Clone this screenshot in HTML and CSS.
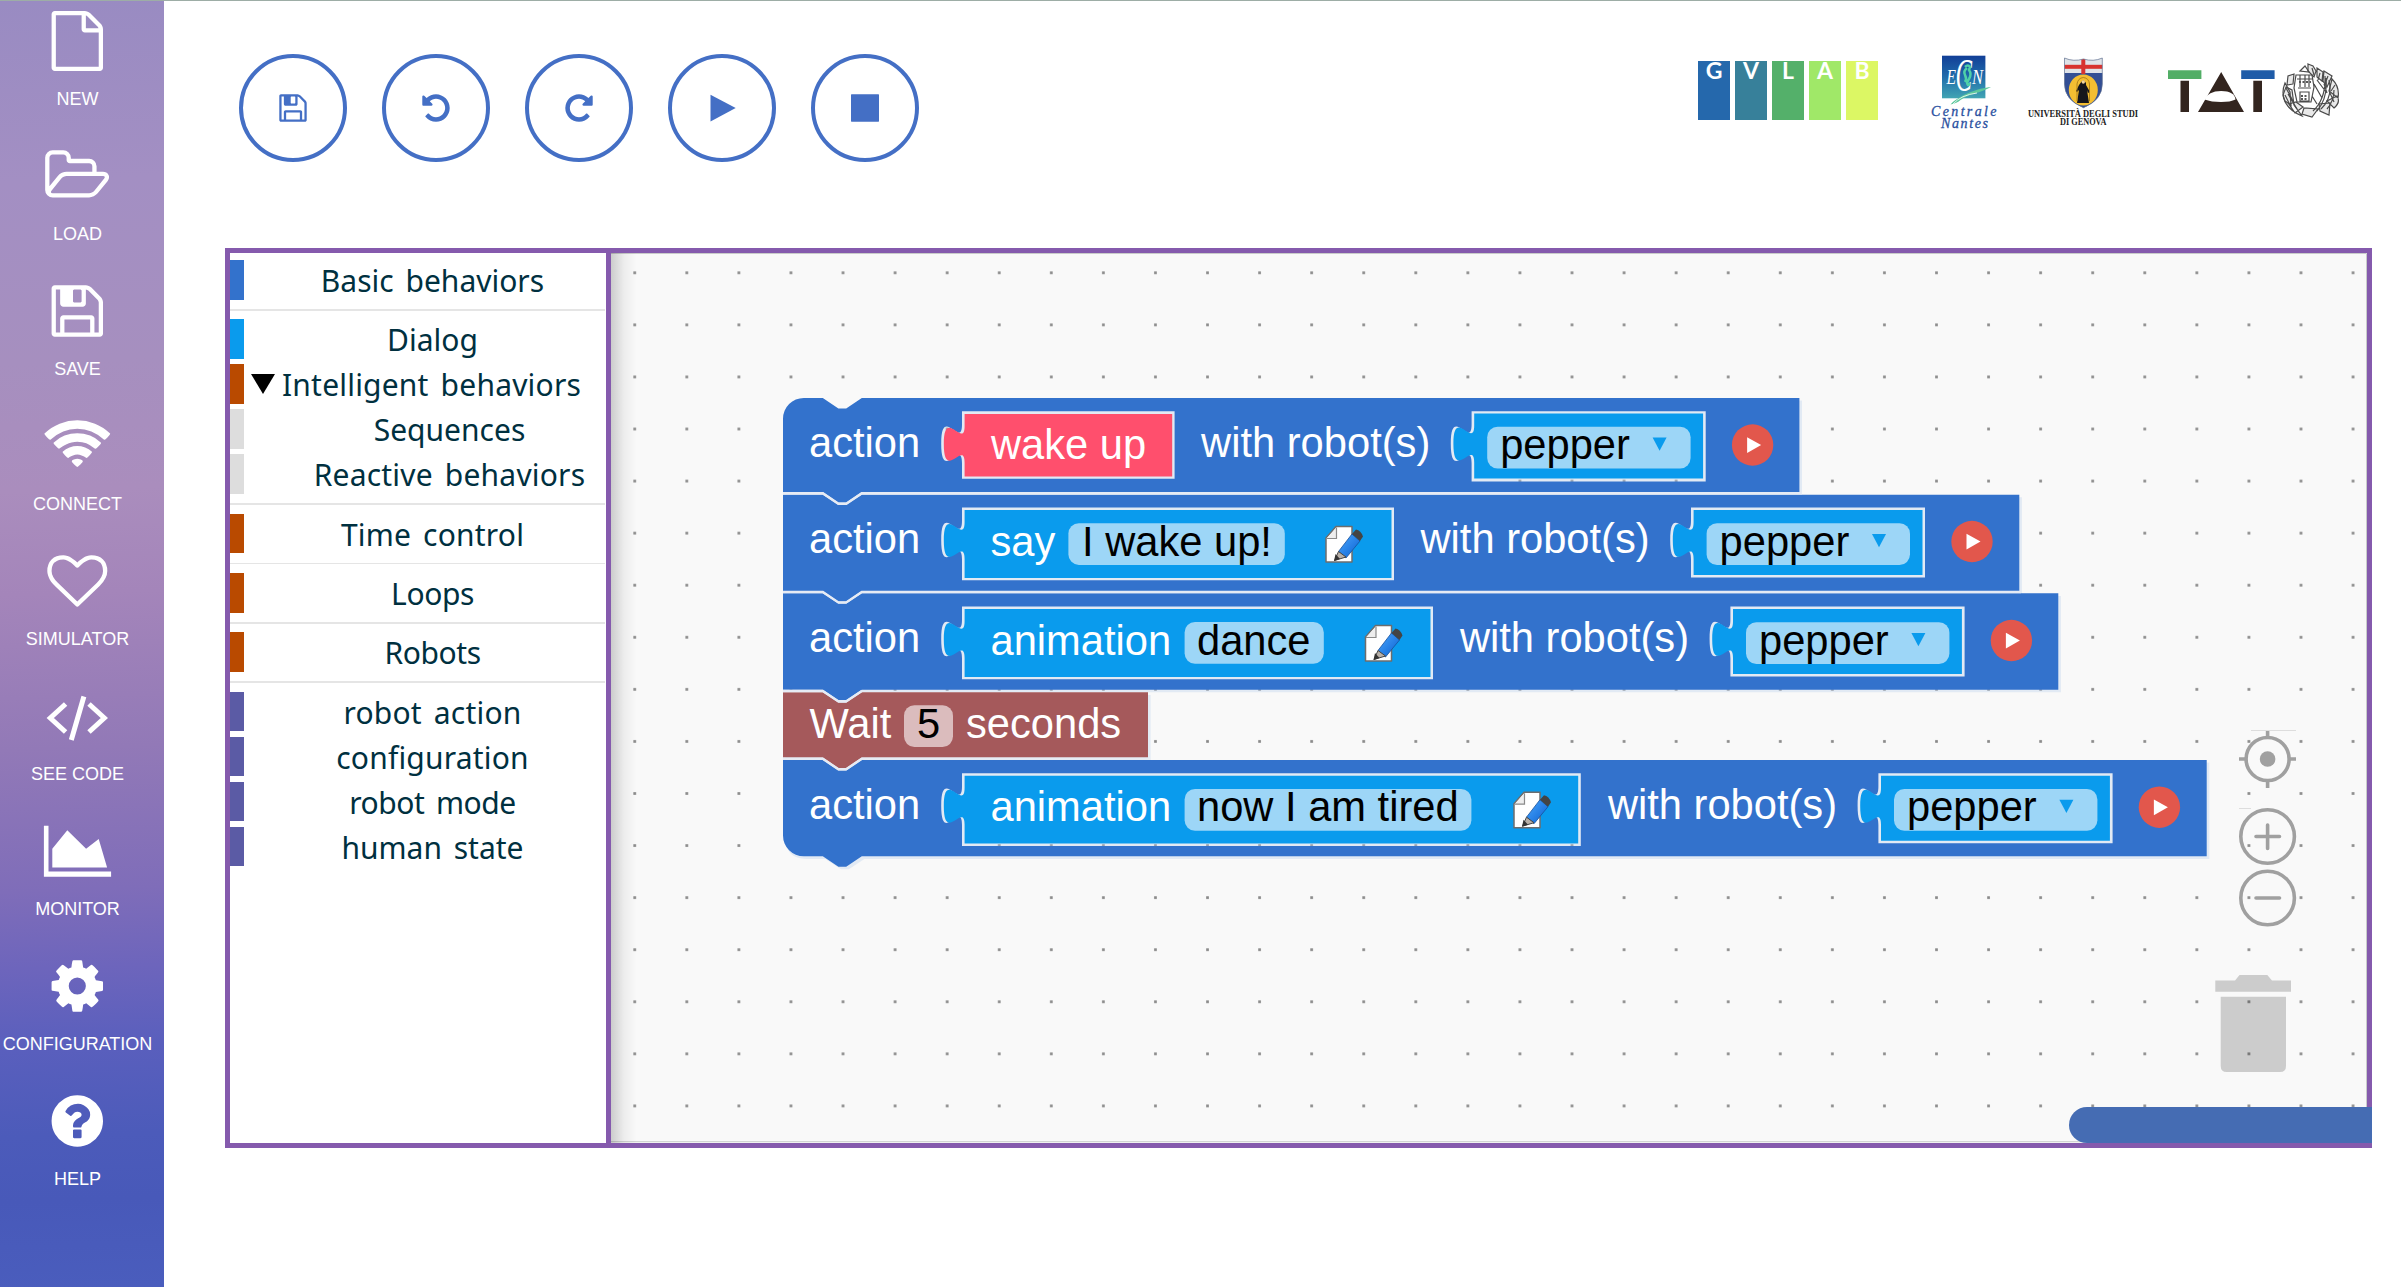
FILE: index.html
```html
<!DOCTYPE html>
<html lang="en">
<head>
<meta charset="utf-8">
<title>Robot programming</title>
<link rel="stylesheet" href="styles.css">
</head>
<body>
<svg class="defs" aria-hidden="true">
  <symbol id="floppy" viewBox="0 0 1792 1792"><path d="M512 1536h768v-384h-768v384zm896 0h128v-896q0-14-10-38.5t-20-34.5l-281-281q-10-10-34-20t-39-10v416q0 40-28 68t-68 28h-576q-40 0-68-28t-28-68v-416h-128v1280h128v-416q0-40 28-68t68-28h832q40 0 68 28t28 68v416zm-384-928v-320q0-13-9.5-22.5t-22.5-9.5h-192q-13 0-22.5 9.5t-9.5 22.5v320q0 13 9.5 22.5t22.5 9.5h192q13 0 22.5-9.5t9.5-22.5zm640 32v928q0 40-28 68t-68 28h-1344q-40 0-68-28t-28-68v-1344q0-40 28-68t68-28h928q40 0 88 20t76 48l280 280q28 28 48 76t20 88z"/></symbol>
  <symbol id="undo" viewBox="0 0 1792 1792"><path d="M1664 896q0 156-61 298t-164 245-245 164-298 61q-172 0-327-72.5t-264-204.5q-7-10-6.5-22.5t8.5-20.5l137-138q10-9 25-9 16 2 23 12 73 95 179 147t225 52q104 0 198.5-40.5t163.5-109.5 109.5-163.5 40.5-198.5-40.5-198.5-109.5-163.5-163.5-109.5-198.5-40.5q-98 0-188 35.5t-160 101.5l137 138q31 30 14 69-17 40-59 40h-448q-26 0-45-19t-19-45v-448q0-42 40-59 39-17 69 14l130 129q107-101 244.5-156.5t284.5-55.5q156 0 298 61t245 164 164 245 61 298z"/></symbol>
</svg>
<div class="app">
  <nav class="sidebar">
    <a class="nav"><svg viewBox="0 0 1792 1792"><path d="M1596 380q28 28 48 76t20 88v1152q0 40-28 68t-68 28h-1344q-40 0-68-28t-28-68v-1600q0-40 28-68t68-28h896q40 0 88 20t76 48zm-444-244v376h376q-10-29-22-41l-313-313q-12-12-41-22zm384 1528v-1024h-416q-40 0-68-28t-28-68v-416h-768v1536h1280z"/></svg><span>NEW</span></a>
    <a class="nav"><svg viewBox="0 0 2048 1792"><path d="M1845 931q0-35-53-35h-1088q-40 0-85.5 21.5t-71.5 52.5l-294 363q-18 24-18 40 0 35 53 35h1088q40 0 86-22t71-53l294-363q18-22 18-39zm-1141-163h768v-160q0-40-28-68t-68-28h-576q-40 0-68-28t-28-68v-64q0-40-28-68t-68-28h-320q-40 0-68 28t-28 68v853l256-315q44-53 116-87.5t140-34.5zm1269 163q0 62-46 120l-295 363q-43 53-116 87.5t-140 34.5h-1088q-92 0-158-66t-66-158v-960q0-92 66-158t158-66h320q92 0 158 66t66 158v32h544q92 0 158 66t66 158v160h192q54 0 99 24.5t67 70.5q15 32 15 68z"/></svg><span>LOAD</span></a>
    <a class="nav"><svg><use href="#floppy"/></svg><span>SAVE</span></a>
    <a class="nav"><svg viewBox="0 0 2048 1792"><path d="M1024 1523q-20 0-93-73.5t-73-93.5q0-32 62.5-54t103.5-22 103.5 22 62.5 54q0 20-73 93.5t-93 73.5zm270-271q-2 0-40-25t-101.5-50-128.5-25-128.5 25-101 50-40.5 25q-18 0-93.5-75t-75.5-93q0-13 10-23 78-77 196-121t233-44 233 44 196 121q10 10 10 23 0 18-75.5 93t-93.5 75zm273-272q-11 0-23-8-136-105-252-154.5t-268-49.5q-85 0-170.5 22t-149 53-113.5 62-79 53-31 22q-17 0-92-75t-75-93q0-12 10-22 132-132 320-205t380-73 380 73 320 205q10 10 10 22 0 18-75 93t-92 75zm271-271q-11 0-22-9-179-157-371.5-236.5t-420.5-79.5-420.5 79.5-371.5 236.5q-11 9-22 9-17 0-92.5-75t-75.5-93q0-13 10-23 187-186 445-288t527-102 527 102 445 288q10 10 10 23 0 18-75.5 93t-92.5 75z"/></svg><span>CONNECT</span></a>
    <a class="nav"><svg viewBox="0 0 1792 1792"><path d="M1664 596q0-81-21.5-143t-55-98.5-81.5-59.5-94-31-98-8-112 25.5-110.5 64-86.5 72-60 61.5q-18 22-49 22t-49-22q-24-28-60-61.5t-86.5-72-110.5-64-112-25.5-98 8-94 31-81.5 59.5-55 98.5-21.5 143q0 168 187 355l581 560 580-559q188-188 188-356zm128 0q0 221-229 450l-623 600q-18 18-44 18t-44-18l-624-602q-10-8-27.5-26t-55.5-65.5-68-97.5-53.5-121-23.5-138q0-220 127-344t351-124q62 0 126.5 21.5t120 58 95.5 68.5 76 68q36-36 76-68t95.5-68.5 120-58 126.5-21.5q224 0 351 124t127 344z"/></svg><span>SIMULATOR</span></a>
    <a class="nav"><svg viewBox="0 0 68 60" class="line"><path d="M22.300 18L7 32l15.300 14M45.700 18L61 32 45.700 46M40.600 10.500L28 54"/></svg><span>SEE CODE</span></a>
    <a class="nav"><svg viewBox="0 0 68 60"><path d="M.6 4.700H5.200v45.800h62.600v5.200H.6zM9 46.500V27.800L24 9.200l18.800 18.600L55.400 18 63.800 46.500z"/></svg><span>MONITOR</span></a>
    <a class="nav"><svg viewBox="0 0 1792 1792"><path d="M1152 896q0-106-75-181t-181-75-181 75-75 181 75 181 181 75 181-75 75-181zm512-109v222q0 12-8 23t-20 13l-185 28q-19 54-39 91 35 50 107 138 10 12 10 25t-9 23q-27 37-99 108t-94 71q-12 0-26-9l-138-108q-44 23-91 38-16 136-29 186-7 28-36 28h-222q-14 0-24.500-8.500t-11.500-21.500l-28-184q-49-16-90-37l-141 107q-10 9-25 9-14 0-25-11-126-114-165-168-7-10-7-23 0-12 8-23 15-21 51-66.500t54-70.500q-27-50-41-99l-183-27q-13-2-21-12.500t-8-23.500v-222q0-12 8-23t19-13l186-28q14-46 39-92-40-57-107-138-10-12-10-24 0-10 9-23 26-36 98.500-107.500t94.500-71.500q13 0 26 10l138 107q44-23 91-38 16-136 29-186 7-28 36-28h222q14 0 24.500 8.500t11.500 21.500l28 184q49 16 90 37l142-107q9-9 24-9 13 0 25 10 129 119 165 170 7 8 7 22 0 12-8 23-15 21-51 66.500t-54 70.500q26 50 41 98l183 28q13 2 21 12.500t8 23.500z"/></svg><span>CONFIGURATION</span></a>
    <a class="nav"><svg viewBox="0 0 1792 1792"><path d="M1024 1376v-192q0-14-9-23t-23-9h-192q-14 0-23 9t-9 23v192q0 14 9 23t23 9h192q14 0 23-9t9-23zm256-672q0-88-55.500-163t-138.500-116-170-41q-243 0-371 213-15 24 8 42l132 100q7 6 19 6 16 0 25-12 53-68 86-92 34-24 86-24 48 0 85.500 26t37.500 59q0 38-20 61t-68 45q-63 28-115.500 86.500t-52.500 125.500v36q0 14 9 23t23 9h192q14 0 23-9t9-23q0-19 21.500-49.500t54.500-49.500q32-18 49-28.500t46-35 44.500-48 28-60.500 12.500-81zm384 192q0 209-103 385.500t-279.500 279.500-385.500 103-385.500-103-279.500-279.500-103-385.500 103-385.500 279.500-279.500 385.500-103 385.500 103 279.500 279.500 103 385.500z"/></svg><span>HELP</span></a>
  </nav>
  <main class="main">
    <header class="header">
      <div class="toolbar">
        <button class="tool"><svg><use href="#floppy"/></svg></button>
        <button class="tool"><svg><use href="#undo"/></svg></button>
        <button class="tool"><svg class="mirror"><use href="#undo"/></svg></button>
        <button class="tool"><svg viewBox="0 0 32 32"><path d="M4.500 2.700L29.700 16 4.500 29.600z"/></svg></button>
        <button class="tool"><svg viewBox="0 0 32 32"><rect x="2" y="2.300" width="28" height="27.400" rx=".6"/></svg></button>
      </div>
      <div class="logos">
        <div class="gvlab"><span class="g1">G</span><span class="g2">V</span><span class="g3">L</span><span class="g4">A</span><span class="g5">B</span></div>
        <svg class="ecn" viewBox="1928 50 70 84">
          <defs><linearGradient id="sea" x1="0" y1="0" x2="0" y2="1"><stop offset="0" stop-color="#123f97"/><stop offset=".5" stop-color="#1f6cab"/><stop offset="1" stop-color="#42a5b3"/></linearGradient></defs>
          <rect x="1942" y="55.700" width="43.400" height="42.600" fill="url(#sea)"/>
          <g font-family="Liberation Serif, serif" font-style="italic" fill="#fff"><text x="1946.500" y="83.500" font-size="22" textLength="9.500" lengthAdjust="spacingAndGlyphs">E</text><text x="1955.500" y="90.500" font-size="47" textLength="16.500" lengthAdjust="spacingAndGlyphs">C</text><text x="1972" y="83.500" font-size="22" textLength="11" lengthAdjust="spacingAndGlyphs">N</text></g>
          <path d="M1965 67q3-3 5 0l-1 3q3 4 0 9-3 4-1 6 2 0 1-2M1967 68q-4 3-2 7t0 7" fill="none" stroke="#4fd0a8" stroke-width="2.500"/>
          <path d="M1991 87c-12 1-32 8-40.500 17.500 4-1 8-2 10-4.500 8-6 20-7 30.500-13z" fill="#5cc79c"/>
          <path d="M1953 104q8-9 24-11" fill="none" stroke="#fff" stroke-width=".8"/>
          <g font-family="Liberation Serif, serif" font-style="italic" fill="#2950a0" stroke="#2950a0" stroke-width=".3" font-size="14"><text x="1931" y="115.500" textLength="65.500">Centrale</text><text x="1941" y="127.500" textLength="47">Nantes</text></g>
        </svg>
        <svg class="genova" viewBox="2026 50 116 84">
          <defs><clipPath id="shield"><path d="M2064.500 58q9 4 19 1 10 3 18.800-1v26q0 16-18.800 23.700-19-7.700-19-23.700z"/></clipPath></defs>
          <g clip-path="url(#shield)"><rect x="2064" y="57" width="39" height="52" fill="#dfe3e8"/><rect x="2064" y="73" width="39" height="36" fill="#334f94"/><rect x="2064" y="64.800" width="39" height="4" fill="#d8332f"/><rect x="2081.300" y="58" width="4" height="16" fill="#d8332f"/><ellipse cx="2083.300" cy="90" rx="14.500" ry="15.500" fill="#f4be32"/><path d="M2080.500 83q3-5 5.500 0v2l4 7-2 1-1-3 2 13h-12l2-13-2 2-1-1 3-6z" fill="#16161c"/><circle cx="2083.300" cy="82" r="1.700" fill="#f3d5a0"/><path d="M2077 101V84q1-6 6.300-6.500 5.500.5 6.200 6.500v17" fill="none" stroke="#a97c19" stroke-width=".9"/></g>
          <path d="M2064.500 58q9 4 19 1 10 3 18.800-1v26q0 16-18.800 23.700-19-7.700-19-23.700z" fill="none" stroke="#60708f" stroke-width=".7"/>
          <g font-family="Liberation Serif, serif" font-weight="bold" fill="#222" font-size="10"><text x="2028" y="117" textLength="110" lengthAdjust="spacingAndGlyphs">UNIVERSITÀ DEGLI STUDI</text><text x="2060" y="125.300" textLength="46.500" lengthAdjust="spacingAndGlyphs">DI GENOVA</text></g>
        </svg>
        <svg class="tat" viewBox="2166 50 180 84">
          <path fill="#52ae66" d="M2168 70.300h33.400v8.700H2168z"/><path fill="#1f5ca8" d="M2241.200 70.300h33.400v8.700h-33.400z"/>
          <path fill="#33251f" d="M2180.500 80.700h8.500V112h-8.500zM2253.300 80.700h8.700V112h-8.700zM2221.200 72L2244 112h-46z"/><path fill="#fff" d="M2204.500 99.500q3.500-8.500 16.700-8.500t14.300 8.500q-5 2.500-14.500 2.500t-16.500-2.500z"/>
          <g fill="none" stroke="#4b4b4b" stroke-width="1.200">
            <path fill="#e9e9e9" d="M2283 95q2 14 19 21l-8-11-2-15-6-3zM2293 84l-6 1 1-9 6-2zM2308 64l5 2 3 5-2 6-6-6zM2317 68l6 4-1 9-5-4zM2324 71l8 5-5 11-4-6zM2332 79q8 8 6 19l-9-7zM2337 96q4 6-3 12l-7-7zM2330 103l-1 12-9-4-1-7zM2318 109l-6 8-10-3 2-6zM2303 107l-8 6-6-9 7-2z"/>
            <path d="M2285 101q-4-8 0-18l5 9 1 13zM2291 107l-6-12M2313 111q13-12 12-35M2317 111q11-13 9-33M2321 109q12-11 8-29M2327 109q7-8 7-19M2296 75h16l2 12-3 15h-14l-3-14zM2298 88h13M2300 92h9v9h-9zM2297 79h16M2300 75v12M2305 75v12M2309 75v12M2286 88l7 13M2330 93l4 9M2324 84l3 9M2300 71l5-5 4 6zM2314 84l8 14M2317 80l9 12M2312 96l5 8M2288 94l9 15M2312 68l2 7M2320 73l-2 7M2328 76l-3 8M2335 85l-4 6"/>
            <path stroke-width="2" stroke="#555" stroke-dasharray="2 1.500" d="M2299 82h12M2301 96h7M2301 99h7"/>
          </g>
        </svg>
      </div>
    </header>
    <section class="editor">
      <ul class="toolbox">
        <li class="cat blue"><span>Basic behaviors</span></li><li class="sep"></li>
        <li class="cat sky"><span>Dialog</span></li>
        <li class="cat rust open"><i class="tri"></i><span class="wide">Intelligent behaviors</span></li>
        <li class="cat grey sub"><span>Sequences</span></li>
        <li class="cat grey sub"><span class="wide">Reactive behaviors</span></li><li class="sep"></li>
        <li class="cat rust"><span class="wide">Time control</span></li><li class="sep"></li>
        <li class="cat rust"><span class="tight">Loops</span></li><li class="sep"></li>
        <li class="cat rust"><span class="tight">Robots</span></li><li class="sep"></li>
        <li class="cat violet"><span class="wide">robot action</span></li>
        <li class="cat violet"><span class="wide">configuration</span></li>
        <li class="cat violet"><span class="tight">robot mode</span></li>
        <li class="cat violet"><span>human state</span></li>
      </ul>
      <div class="workspace">
        <svg class="canvas" viewBox="611 253 1756 890" width="1756" height="890">
          <defs>
            <pattern id="grid" x="608.700" y="246.750" width="52.070" height="52.070" patternUnits="userSpaceOnUse"><rect x="24.700" y="24.700" width="2.700" height="2.700" fill="#888"/></pattern>
            <linearGradient id="pen" x1="0" y1="0" x2="1" y2="1"><stop offset="0" stop-color="#4aa8ff"/><stop offset="1" stop-color="#0a5fd0"/></linearGradient>
            <!-- Tail shared by every action block; origin is the robot socket's top-left corner -->
            <g id="robot">
              <text x="-270.500" y="45.700" class="lbl">with robot(s)</text>
              <path class="sky" d="M2.600 2.600v12c0 24-20.800-20-20.800 18.200s20.800-5 20.800 18.700V67.500H231.500V2.600z"/>
              <rect class="field" x="15.600" y="15.800" width="203.400" height="41.700" rx="10.400"/>
              <text x="28.600" y="48" class="val">pepper</text>
              <path class="sky" d="M181 26.500h14l-7 13.200z"/>
              <circle cx="281" cy="34" r="20.700" fill="#e2574c"/><path d="M275.500 26.300L289.500 34l-14 8z" fill="#fff"/>
            </g>
            <!-- Page-and-pencil edit icon -->
            <g id="edit">
              <path d="M11 1.500H27V37H1V13z" fill="#fff" stroke="#6d6d6d" stroke-width="1.500" stroke-linejoin="round"/><path d="M11.500 2.500V13.500H1.500" fill="#eee" stroke="#8a8a8a" stroke-width="1.200"/>
              <path d="M27 9l8 7L21 33l-7.500-6.500z" fill="url(#pen)" stroke="#17509c" stroke-width=".8"/><path d="M27 9l4-4.500q5 1 7 7L35 16z" fill="#444"/><path d="M13.500 26.500L21 32 9.500 35.500z" fill="#b8b0a8" stroke="#444" stroke-width="1"/><path d="M9 36l1.500-7 4.500 5z" fill="#333"/>
            </g>
          </defs>
          <rect x="611" y="253" width="1756" height="890" fill="#f9f9f9"/>
          <rect x="611" y="253" width="1756" height="890" fill="url(#grid)"/>
          <g class="shadow">
            <path transform="translate(2.600 2.600)" d="M783 418.800q0-20.800 20.800-20.800h19l15.600 10.400h7.800L861.800 398h937.600v94H783zM783 494.700H2019.300V591H783zM783 593.300H2058.300V689.700H783zM783 692.300H1148V757.500H783zM783 760H2206.700v96.300H861.800L846.200 866.700h-7.800L822.800 856.300h-19q-20.800 0-20.800-20.800z"/>
          </g>
          <!-- Statement blocks, with sockets cut out -->
          <g class="stmt">
            <path d="M783 418.800a20.800 20.800 0 0 1 20.800-20.800h19l15.600 10.400h7.800L861.800 398H1799.400v94H861.800L846.200 502.400h-7.800L822.800 492H783z
              M962 411.300v13c0 26-20.800-20.800-20.800 19.500s20.800-6.500 20.800 19.500V478.700h212.600V411.300z
              M1471.600 411.300v13c0 26-20.800-20.800-20.800 19.500s20.800-6.500 20.800 19.500V481.400h234.100V411.300z"/>
            <path d="M783 494.700h39.800l15.600 10.400h7.800l15.600-10.400H2019.300V591H861.800l-15.600 10.400h-7.800L822.800 591H783z
              M962 507.500v13c0 26-20.800-20.800-20.800 19.500s20.800-6.500 20.800 19.500V580.300h432V507.500z
              M1691 507.500v13c0 26-20.800-20.800-20.800 19.500s20.800-6.500 20.800 19.500V577.600h234V507.500z"/>
            <path d="M783 593.300h39.800l15.600 10.400h7.800l15.600-10.400H2058.300V689.700H861.800l-15.600 10.400h-7.800L822.800 689.700H783z
              M962 606.500v13c0 26-20.800-20.800-20.800 19.500s20.800-6.500 20.800 19.500V679.300h471V606.500z
              M1730.400 606.500v13c0 26-20.800-20.800-20.800 19.500s20.800-6.500 20.800 19.500V676.600h234.200V606.500z"/>
            <path class="wait" d="M783 692.300h39.800l15.600 10.400h7.800l15.600-10.400H1148V757.500H861.800l-15.600 10.400h-7.800L822.800 757.500H783z"/>
            <path d="M783 760h39.800l15.600 10.400h7.800L861.800 760H2206.700v96.300H861.800L846.200 866.700h-7.800L822.800 856.300h-19a20.800 20.800 0 0 1-20.800-20.800z
              M962 773.200v13c0 26-20.800-20.800-20.800 19.500s20.800-6.500 20.800 19.500V846h618.800V773.200z
              M1878.400 773.200v13c0 26-20.800-20.800-20.800 19.500s20.800-6.500 20.800 19.500V843.300h234.200V773.200z"/>
          </g>
          <g class="seam">
            <path d="M783 493.300h39.800l15.600 10.400h7.800l15.600-10.400H1802M783 592h39.800l15.600 10.400h7.800l15.600-10.400H2021M783 691h39.800l15.600 10.400h7.800l15.600-10.400M783 758.800h39.800l15.600 10.400h7.800l15.600-10.400H1150"/>
          </g>
          <!-- Value blocks -->
          <path class="pink" d="M964.600 413.900v12c0 24-20.800-20-20.800 18.200s20.800-5 20.800 18.700V476.500H1172.200V413.900z"/>
          <path class="sky" d="M964.600 510.100v12c0 24-20.800-20-20.800 18.200s20.800-5 20.800 18.700V578H1391.500V510.100z"/>
          <path class="sky" d="M964.600 609.100v12c0 24-20.800-20-20.800 18.200s20.800-5 20.800 18.700V677H1430.500V609.100z"/>
          <path class="sky" d="M964.600 775.800v12c0 24-20.800-20-20.800 18.200s20.800-5 20.800 18.700V843.600H1578.200V775.800z"/>
          <text x="809" y="456.700" class="lbl">action</text><text x="991" y="459.300" class="lbl">wake up</text>
          <use href="#robot" x="1471.600" y="411"/>
          <text x="809" y="553" class="lbl">action</text><text x="990.500" y="555.700" class="lbl">say</text>
          <rect class="field" x="1068.400" y="523.200" width="216.400" height="41.700" rx="10.400"/><text x="1082" y="555.700" class="val">I wake up!</text>
          <use href="#edit" x="1325" y="525"/><use href="#robot" x="1691" y="507.500"/>
          <text x="809" y="652" class="lbl">action</text><text x="990.500" y="654.700" class="lbl">animation</text>
          <rect class="field" x="1184.600" y="622" width="139.200" height="41.700" rx="10.400"/><text x="1197" y="654.700" class="val">dance</text>
          <use href="#edit" x="1364.500" y="624"/><use href="#robot" x="1730.400" y="606.500"/>
          <text x="809.500" y="737.500" class="lbl">Wait</text><rect class="wfield" x="904" y="705.300" width="49" height="41.700" rx="10.400"/><text x="917" y="737.500" class="val">5</text><text x="966" y="737.500" class="lbl">seconds</text>
          <text x="809" y="818.700" class="lbl">action</text><text x="990.500" y="821.300" class="lbl">animation</text>
          <rect class="field" x="1184.600" y="789" width="286.800" height="41.700" rx="10.400"/><text x="1197" y="821.300" class="val">now I am tired</text>
          <use href="#edit" x="1513" y="790.700"/><use href="#robot" x="1878.400" y="773.200"/>
          <!-- Zoom controls -->
          <g fill="none" stroke="#a0a0a0" stroke-width="3.600">
            <circle cx="2267.600" cy="759" r="21.500"/><path d="M2267.600 730.500v7M2267.600 780.500v7.500M2239 759h7M2289 759h7"/><circle cx="2267.600" cy="759" r="7.800" fill="#a0a0a0" stroke="none"/>
            <circle cx="2267.600" cy="836.500" r="26.800"/><path stroke-linecap="round" d="M2256 836.500h23.500M2267.600 825v23.500"/>
            <circle cx="2267.600" cy="898" r="26.800"/><path stroke-linecap="round" d="M2256 898h23.500"/>
            <path stroke="#ddd" stroke-width="1" d="M2251 730.500h45M2239 808.500h12"/>
          </g>
          <path fill="#000" fill-opacity=".18" d="M2215.300 980.500H2235L2239.500 975H2267.300L2272 980.500H2291v11.200H2215.300zM2220.700 996.700H2286V1066q0 6-6 6H2226.700q-6 0-6-6z"/>
          <path d="M611 253.500H2366.500V1141.700H611" fill="none" stroke="#c9ccca" stroke-width="1"/>
        </svg>
        <div class="scrollbar"></div>
      </div>
    </section>
  </main>
</div>
</body>
</html>
```
FILE: styles.css
```css
* { box-sizing: border-box; }
body { margin: 0; background: #fff; font-family: "Liberation Sans", Arial, sans-serif; overflow: hidden; }
.defs { position: absolute; width: 0; height: 0; }
.app { display: flex; height: 1287px; border-top: 1px solid #9dada6; }

.sidebar { width: 164px; height: 1286px; padding: 10px 9px 0 0; flex: none;
  background: linear-gradient(178deg, #998bc2 0%, #a38fc3 14%, #a68fbf 28%, #aa8dbd 38%, #a485ba 46%, #9279b7 58%, #7f6db9 69%, #6d65bc 75%, #5a5fbd 81%, #4c5bba 88%, #4859b9 93%, #4a5dbd 100%); }
.nav { display: flex; flex-direction: column; align-items: center; height: 135px; color: #fff; font-size: 18px; }
.nav svg { height: 60px; width: 68.600px; fill: #fff; flex: none; }
.nav svg.line { fill: none; stroke: #fff; stroke-width: 5; }
.nav span { margin-top: 18px; line-height: 21px; white-space: nowrap; }

.main { flex: 1; padding: 53px 29px 0 61px; }
.header { display: flex; justify-content: space-between; height: 194px; padding-left: 14px; }
.toolbar { display: flex; gap: 35px; }
.tool { width: 108px; height: 108px; border: 4px solid #446fc5; border-radius: 50%; background: #fff; padding: 0; display: flex; align-items: center; justify-content: center; }
.tool svg { width: 32px; height: 32px; fill: #446fc5; }
.tool .mirror { transform: scaleX(-1); }

.logos { display: flex; align-items: flex-start; width: 674px; }
.gvlab { display: flex; gap: 5px; margin-top: 7px; width: 180px; height: 59px; flex: none; }
.gvlab span { width: 32px; height: 59px; color: #fff; font: 700 23px/19px Lato, sans-serif; text-align: center; }
.g1 { background: #2568ac; } .g2 { background: #37809a; } .g3 { background: #54b06a; } .g4 { background: #a0e868; } .g5 { background: #dcf764; }
.logos svg { flex: none; height: 84px; margin-top: -4px; overflow: visible; }
.ecn { width: 70px; margin-left: 50px; }
.genova { width: 116px; margin-left: 28px; }
.tat { width: 180px; margin-left: 24px; }

.editor { display: flex; width: 2147px; height: 900px; border: 5px solid #855aad; }
.toolbox { list-style: none; margin: 0; padding: 7px 0 0; width: 381px; flex: none; border-right: 5px solid #855aad; font: 30px/41px "Noto Sans", sans-serif; word-spacing: 4px; color: #00303f; }
.cat { height: 39.700px; margin-bottom: 5.300px; border-left: 14px solid; display: flex; justify-content: center; padding-left: 15px; white-space: nowrap; }
.cat span { color: #00303f; }
.cat .wide { letter-spacing: .200px; }
.cat .tight { letter-spacing: -.400px; }
.cat.sub { padding-left: 49px; }
.cat.open { padding-left: 7px; justify-content: flex-start; }
.blue { border-color: #3372cc; } .rust { border-color: #b94a00; } .grey { border-color: #ddd; } .violet { border-color: #5b5ba5; }
.cat.sky { border-color: #0a9bed; }
.sep { height: 1.800px; margin: 9.200px 1px 8.700px 0; background: #e5e5e5; }
.tri { border: 12px solid transparent; border-top: 20px solid #000; border-bottom: 0; height: 0; margin: 10px 7px 0 0; }

.workspace { position: relative; flex: 1; }
.canvas { display: block; }
.workspace::before { content: ""; position: absolute; left: 0; top: 0; width: 26px; height: 890px; background: linear-gradient(90deg, rgba(0,0,0,.18), rgba(0,0,0,.05) 50%, transparent); }
.scrollbar { position: absolute; left: 1458px; top: 853.500px; width: 303px; height: 36px; background: #456cb3; border-radius: 18px 0 0 18px; }
.canvas text { font-family: "Liberation Sans", Arial, sans-serif; font-size: 41.670px; }
.canvas .lbl { fill: #fff; }
.canvas .val { fill: #000; }
.stmt path { fill: #3372cc; fill-rule: evenodd; }
.stmt .wait { fill: #a5595b; }
.shadow { fill: #b8cdea; fill-opacity: .35; }
.seam { fill: none; stroke: #e6ebf4; stroke-width: 2.400; }
path.sky { fill: #0a9bed; }
.pink { fill: #ff4f6d; }
.field { fill: #9dd6f7; }
.wfield { fill: #dbbcbd; }
```
